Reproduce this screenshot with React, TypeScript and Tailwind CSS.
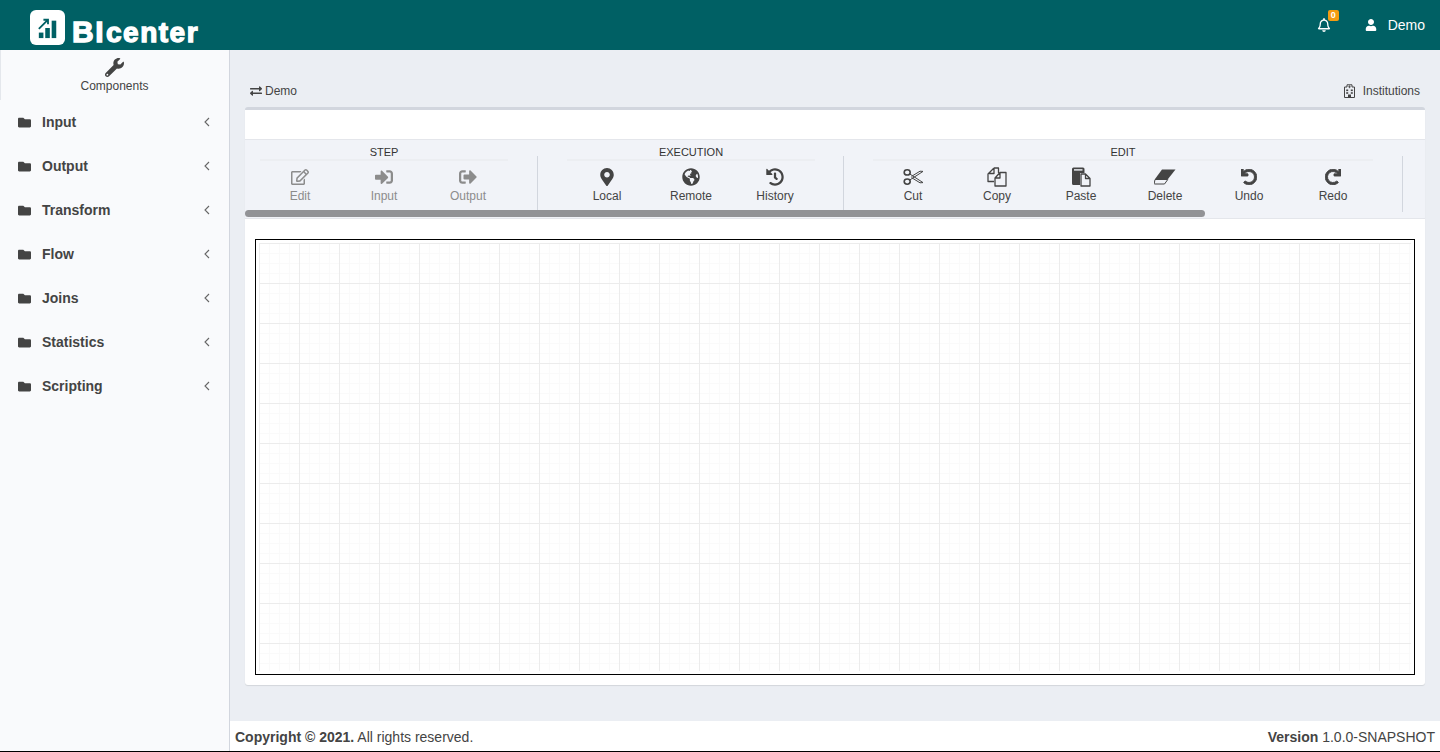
import type { ReactNode } from "react";
import {
  FaWrench,
  FaFolder,
  FaExchangeAlt,
  FaRegEdit,
  FaSignInAlt,
  FaSignOutAlt,
  FaMapMarkerAlt,
  FaGlobeAmericas,
  FaHistory,
  FaUndo,
  FaRedo,
  FaRegBell,
  FaUser,
} from "react-icons/fa";

const menu = ["Input", "Output", "Transform", "Flow", "Joins", "Statistics", "Scripting"];

function LogoMark() {
  return (
    <div className="flex h-[35px] w-[35px] items-center justify-center rounded-[6px] bg-white">
      <svg width="22" height="22" viewBox="0 0 24 24" fill="#006064">
        <rect x="2" y="17" width="5" height="6" />
        <rect x="9" y="12" width="5" height="11" />
        <rect x="16" y="4" width="5" height="19" />
        <path d="M2 13 L11 4 M7 3 H12 V8" fill="none" stroke="#006064" strokeWidth="2" />
      </svg>
    </div>
  );
}

function CutIcon() {
  return (
    <svg width="21" height="18" viewBox="0 0 21 18" fill="none" stroke="#444" strokeWidth="1">
      <ellipse cx="4.2" cy="4.4" rx="3" ry="2.6" strokeWidth="1.6" />
      <ellipse cx="4.2" cy="13.6" rx="3" ry="2.6" strokeWidth="1.6" />
      <path d="M6.8 6 L20 14.6 L17 14.8 L8.5 9.6 M6.8 12 L20 3.4 L17 3.2 L8.5 8.4" />
    </svg>
  );
}

function CopyIcon() {
  return (
    <svg width="20" height="20" viewBox="0 0 20 20" fill="none" stroke="#444" strokeWidth="1.3" strokeLinejoin="round">
      <path d="M7 1 H11.5 V6 M7 1 L1 7 V14.5 H7 M7 1 V6.5 H2" />
      <path d="M13 5.5 H19 V19 H8 V11 L13 5.5 Z M13 5.5 V11 H8" />
    </svg>
  );
}

function PasteIcon() {
  return (
    <svg width="20" height="20" viewBox="0 0 20 20">
      <path d="M1 2 Q1 0.5 2.5 0.5 H12 Q13.5 0.5 13.5 2 V6 H9 V18 H2.5 Q1 18 1 16.5 Z" fill="#444" />
      <rect x="3" y="2.2" width="8.5" height="1.4" fill="#f1f3f8" />
      <path d="M10 7 H14.5 L19 11.5 V19 H10 Z M14.5 7 V11.5 H19" fill="#f1f3f8" stroke="#444" strokeWidth="1.3" strokeLinejoin="round" />
    </svg>
  );
}

function EraserIcon() {
  return (
    <svg width="22" height="16" viewBox="0 0 22 16">
      <path d="M8 0.5 H21.5 L14 10 H1 Z" fill="#444" />
      <path d="M1 10.5 H13.8 L10.5 15 H0.7 Q0 15 0.3 14 Z" fill="#f1f3f8" stroke="#444" strokeWidth="1" />
    </svg>
  );
}

function HospitalIcon() {
  return (
    <svg width="11" height="14" viewBox="0 0 11 14" fill="none" stroke="#444" strokeWidth="1">
      <path d="M3 3 V0.8 H8 V3 H10.5 V13.5 H0.5 V3 Z" />
      <path d="M5.5 1.4 V4.2 M4.2 2.8 H6.8" strokeWidth="0.8" />
      <rect x="2.2" y="5.5" width="2" height="1.6" fill="#444" stroke="none" />
      <rect x="6.8" y="5.5" width="2" height="1.6" fill="#444" stroke="none" />
      <rect x="2.2" y="8.2" width="2" height="1.6" fill="#444" stroke="none" />
      <rect x="6.8" y="8.2" width="2" height="1.6" fill="#444" stroke="none" />
      <rect x="4" y="10.5" width="3" height="3" fill="#444" stroke="none" />
    </svg>
  );
}

function Chevron() {
  return (
    <svg width="6" height="10" viewBox="0 0 6 10" fill="none" stroke="#666" strokeWidth="1.1" className="ml-auto">
      <path d="M5 1 L1 5 L5 9" />
    </svg>
  );
}

function Tool({ icon, label, muted }: { icon: ReactNode; label: string; muted?: boolean }) {
  return (
    <div className={`flex w-[84px] flex-col items-center ${muted ? "text-[#8c8c8c]" : "text-[#444]"}`}>
      <div className="flex h-[20px] items-center justify-center text-[18px]">{icon}</div>
      <span className="mt-[1px] text-[12px] leading-[16px]">{label}</span>
    </div>
  );
}

function Group({ title, pl, pr, children }: { title: string; pl: string; pr: string; children: ReactNode }) {
  return (
    <div className={`flex flex-col ${pl} ${pr}`}>
      <div className="mx-[2px] border-b-2 border-[#eceef2] text-center text-[11px] leading-[14px] text-[#333]">
        {title}
      </div>
      <div className="mt-[6px] flex">{children}</div>
    </div>
  );
}

function Separator() {
  return <div className="mt-[11px] h-[56px] w-px bg-[#d2d6de]" />;
}

export default function App() {
  return (
    <div className="flex h-[752px] w-[1440px] flex-col overflow-hidden border-b border-black font-['Liberation_Sans',sans-serif] text-[#444]">
      <header className="flex h-[50px] shrink-0 items-center bg-[#006064] text-white">
        <div className="ml-[30px] mt-[5px] flex items-center gap-[7px]">
          <LogoMark />
          <span className="mt-[9px] flex items-baseline font-bold leading-none tracking-[1.5px] [-webkit-text-stroke:1.3px_white]">
            <span className="mr-[1px] text-[30px]">BI</span>
            <span className="text-[28px]">center</span>
          </span>
        </div>
        <div className="ml-auto flex items-center pr-[15px]">
          <div className="relative mr-[34px]">
            <FaRegBell size={14} />
            <span className="absolute -top-[8px] left-[11px] flex h-[11px] w-[11px] items-center justify-center rounded-[2px] bg-[#f39c12] text-[9px] font-bold leading-none text-white">
              0
            </span>
          </div>
          <FaUser size={12} />
          <span className="ml-[11px] text-[14px]">Demo</span>
        </div>
      </header>

      <div className="flex min-h-0 flex-1">
        <aside className="w-[230px] shrink-0 border-r border-[#d2d6de] bg-[#f9fafc]">
          <div className="flex h-[50px] flex-col items-center border-l border-[#e4e7ec] pr-[1px] pt-[8px]">
            <FaWrench size={19} className="text-[#444]" />
            <span className="mt-[1px] text-[12px] leading-[16px]">Components</span>
          </div>
          <ul>
            {menu.map((item) => (
              <li key={item} className="flex h-[44px] items-center pl-[18px] pr-[19px]">
                <FaFolder size={13} className="text-[#444]" />
                <span className="ml-[11px] text-[14px] font-bold">{item}</span>
                <Chevron />
              </li>
            ))}
          </ul>
        </aside>

        <div className="flex min-w-0 flex-1 flex-col bg-[#ebeef3]">
          <main className="flex-1 px-[15px]">
            <div className="flex h-[57px] items-end justify-between px-[5px] pb-[8px] text-[12px] leading-[16px]">
              <div className="flex items-center gap-[3px]">
                <FaExchangeAlt size={12} />
                <span>Demo</span>
              </div>
              <div className="flex items-center gap-[8px]">
                <HospitalIcon />
                <span>Institutions</span>
              </div>
            </div>

            <section className="overflow-hidden rounded-[3px] border-t-[3px] border-[#d2d6de] bg-white shadow-[0_1px_1px_rgba(0,0,0,0.1)]">
              <div className="h-[29px]" />
              <div className="relative flex h-[80px] border-y border-[#e4e6eb] bg-[#f1f3f8] pt-[5px]">
                <Group title="STEP" pl="pl-[13px]" pr="pr-[27px]">
                  <Tool muted icon={<FaRegEdit />} label="Edit" />
                  <Tool muted icon={<FaSignInAlt />} label="Input" />
                  <Tool muted icon={<FaSignOutAlt />} label="Output" />
                </Group>
                <Separator />
                <Group title="EXECUTION" pl="pl-[27px]" pr="pr-[26px]">
                  <Tool icon={<FaMapMarkerAlt />} label="Local" />
                  <Tool icon={<FaGlobeAmericas />} label="Remote" />
                  <Tool icon={<FaHistory />} label="History" />
                </Group>
                <Separator />
                <Group title="EDIT" pl="pl-[27px]" pr="pr-[27px]">
                  <Tool icon={<CutIcon />} label="Cut" />
                  <Tool icon={<CopyIcon />} label="Copy" />
                  <Tool icon={<PasteIcon />} label="Paste" />
                  <Tool icon={<EraserIcon />} label="Delete" />
                  <Tool icon={<FaUndo size={16} strokeWidth={30} stroke="currentColor" />} label="Undo" />
                  <Tool icon={<FaRedo size={16} strokeWidth={30} stroke="currentColor" />} label="Redo" />
                </Group>
                <Separator />
                <div className="absolute bottom-px left-0 h-[7px] w-[960px] rounded-full bg-[#929396]" />
              </div>
              <div className="p-[10px] pt-[20px]">
                <div className="h-[436px] border border-black p-[3px]">
                  <div className="h-full w-full bg-[linear-gradient(#ececec_1px,transparent_1px),linear-gradient(90deg,#ececec_1px,transparent_1px),linear-gradient(#fafafa_1px,transparent_1px),linear-gradient(90deg,#fafafa_1px,transparent_1px)] bg-[size:40px_40px,40px_40px,10px_10px,10px_10px]" />
                </div>
              </div>
            </section>
          </main>

          <footer className="flex h-[30px] shrink-0 items-center justify-between bg-white px-[5px] pt-[2px] text-[14px] text-[#444]">
            <span>
              <b>Copyright © 2021.</b> All rights reserved.
            </span>
            <span>
              <b>Version</b> 1.0.0-SNAPSHOT
            </span>
          </footer>
        </div>
      </div>
    </div>
  );
}
